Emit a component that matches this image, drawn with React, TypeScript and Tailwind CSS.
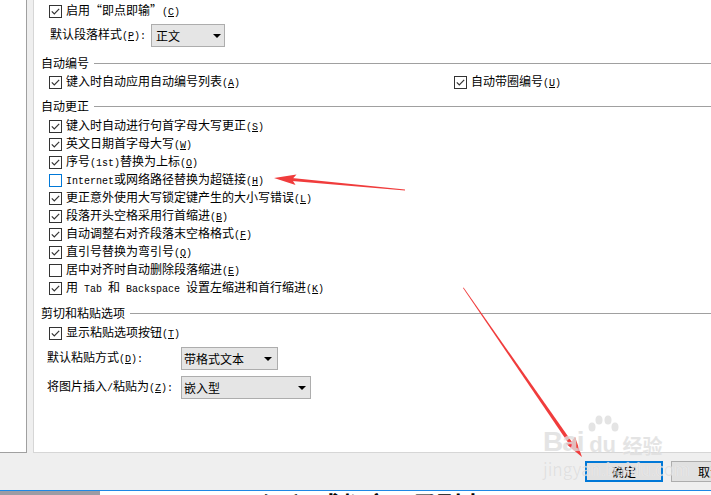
import React from "react"

const isAscii = (s: string) => /^[\x00-\x7f]+$/.test(s)

// Latin runs render as half-width mono, "&X" marks the underlined access key
function Latin({ s }: { s: string }) {
  const i = s.indexOf("&")
  const cls = "font-['Liberation_Mono',monospace] text-[10px]"
  if (i < 0) return <span className={cls}>{s}</span>
  return (
    <span className={cls}>
      {s.slice(0, i)}
      <span className="underline underline-offset-1">{s[i + 1]}</span>
      {s.slice(i + 2)}
    </span>
  )
}

function Label({ text }: { text: string }) {
  const parts = text.split(/([\x00-\x7f]+)/).filter(Boolean)
  return (
    <span className="whitespace-pre">
      {parts.map((p, i) => (isAscii(p) ? <Latin key={i} s={p} /> : <span key={i}>{p}</span>))}
    </span>
  )
}

function Box({ checked, focus }: { checked?: boolean; focus?: boolean }) {
  return (
    <svg width="13" height="13" viewBox="0 0 13 13" className="shrink-0">
      <rect x="0.5" y="0.5" width="12" height="12" fill="white" stroke={focus ? "#0078d7" : "#333333"} />
      {checked && <path d="M2.8 6.4 L5.3 8.9 L10.2 3.8" fill="none" stroke="#333333" strokeWidth="1.2" />}
    </svg>
  )
}

function Check({ text, checked = true, focus }: { text: string; checked?: boolean; focus?: boolean }) {
  return (
    <div className="flex h-[18px] items-center gap-[4px]">
      <Box checked={checked} focus={focus} />
      <Label text={text} />
    </div>
  )
}

function Group({ title, className }: { title: string; className: string }) {
  return (
    <div className={`flex h-[16px] items-center gap-[5px] pl-[7px] ${className}`}>
      <Label text={title} />
      <div className="h-px flex-1 bg-[#a0a0a0]" />
    </div>
  )
}

function Select({ value, width, pad }: { value: string; width: string; pad: string }) {
  return (
    <div className={`flex h-[23px] items-center justify-between border border-[#adadad] bg-[#e5e5e5] ${width} ${pad}`}>
      <Label text={value} />
      <svg width="8" height="4" viewBox="0 0 8 4">
        <path d="M0 0 H8 L4 4 Z" fill="#000" />
      </svg>
    </div>
  )
}

const autoCorrect = [
  { t: "键入时自动进行句首字母大写更正(&S)" },
  { t: "英文日期首字母大写(&W)" },
  { t: "序号(1st)替换为上标(&O)" },
  { t: "Internet或网络路径替换为超链接(&H)", off: true, focus: true },
  { t: "更正意外使用大写锁定键产生的大小写错误(&L)" },
  { t: "段落开头空格采用行首缩进(&B)" },
  { t: "自动调整右对齐段落末空格格式(&F)" },
  { t: "直引号替换为弯引号(&Q)" },
  { t: "居中对齐时自动删除段落缩进(&E)", off: true },
  { t: "用 Tab 和 Backspace 设置左缩进和首行缩进(&K)" },
]

export default function App() {
  return (
    <div className="relative flex h-[495px] w-[711px] flex-col overflow-hidden bg-[#efefef] font-['Noto_Sans_CJK_SC',sans-serif] text-[12px] leading-[18px] text-black">
      <div className="flex h-[453px] shrink-0">
        <div className="w-[27px] border-r border-b border-[#a0a0a0] bg-white" />
        <div className="w-[6px]" />
        <div className="flex flex-1 flex-col border-l border-b border-[#d6d6d6] bg-white">
          <div className="mt-[2px] pl-[15px]">
            <Check text="启用“即点即输”(&C)" />
          </div>
          <div className="mt-[4px] flex items-center pl-[16px]">
            <div className="w-[101px]">
              <Label text="默认段落样式(&P):" />
            </div>
            <Select value="正文" width="w-[74px]" pad="pl-[4px] pr-[3px]" />
          </div>

          <Group title="自动编号" className="mt-[8px]" />
          <div className="mt-[2px] flex pl-[15px]">
            <div className="w-[405px]">
              <Check text="键入时自动应用自动编号列表(&A)" />
            </div>
            <Check text="自动带圈编号(&U)" />
          </div>

          <Group title="自动更正" className="mt-[7px]" />
          <div className="mt-[3px] flex flex-col pl-[15px]">
            {autoCorrect.map(r => (
              <Check key={r.t} text={r.t} checked={!r.off} focus={r.focus} />
            ))}
          </div>

          <Group title="剪切和粘贴选项" className="mt-[8px]" />
          <div className="mt-[3px] pl-[15px]">
            <Check text="显示粘贴选项按钮(&T)" />
          </div>
          <div className="mt-[5px] flex items-center pl-[13px]">
            <div className="w-[134px]">
              <Label text="默认粘贴方式(&D):" />
            </div>
            <Select value="带格式文本" width="w-[97px]" pad="pl-[2px] pr-[5px]" />
          </div>
          <div className="mt-[6px] flex items-center pl-[13px]">
            <div className="w-[134px]">
              <Label text="将图片插入/粘贴为(&Z):" />
            </div>
            <Select value="嵌入型" width="w-[130px]" pad="pl-[2px] pr-[4px]" />
          </div>
        </div>
      </div>

      <div className="flex h-[37px] shrink-0 items-start justify-end gap-[8px] pt-[8px] -mr-[38px]">
        <button type="button" className="flex h-[21px] w-[78px] items-center justify-center border-2 border-[#0078d7] bg-[#e1e1e1]">
          确定
        </button>
        <button type="button" className="flex h-[21px] w-[78px] items-center justify-center border border-[#adadad] bg-[#e1e1e1]">
          取消
        </button>
      </div>

      <div className="h-px shrink-0 bg-[#1e88e5]" />
      <div className="flex h-[4px] shrink-0 overflow-hidden">
        <div className="w-[100px] bg-[#9c9ca4]" />
        <div className="flex-1 bg-white pl-[145px]">
          <div className="mt-[1px] text-[24px] font-bold leading-none">（二）成都市目录列表</div>
        </div>
      </div>

      {/* red annotation arrows */}
      <svg className="pointer-events-none absolute inset-0" width="711" height="495">
        <polygon points="405,189.6 405,190.4 292,181 292,178" fill="#f03c3c" />
        <polygon points="274,178 296.5,174.5 292,179.6 295.6,185" fill="#f03c3c" />
        <polygon points="463,288 463.6,287.6 572,442 569,444" fill="#f03c3c" />
        <polygon points="582,457 575,436.8 571.5,442 565.6,443.6" fill="#f03c3c" />
      </svg>

      {/* baidu watermark */}
      <div className="pointer-events-none absolute left-[543px] top-[414px] flex flex-col text-[#dedede] opacity-80 [text-shadow:0_0_1px_#fff]">
        <div className="flex items-end font-['Liberation_Sans',sans-serif]">
          <span className="text-[28px] font-bold leading-none tracking-[-1px]">Bai</span>
          <div className="relative ml-[2px] flex flex-col items-center">
            <svg width="34" height="20" viewBox="0 0 34 20" fill="#dedede">
              <ellipse cx="6" cy="13" rx="3.5" ry="4.5" />
              <ellipse cx="13" cy="6" rx="3.5" ry="4.5" />
              <ellipse cx="22" cy="6" rx="3.5" ry="4.5" />
              <ellipse cx="29" cy="13" rx="3.5" ry="4.5" />
            </svg>
            <span className="text-[22px] font-bold leading-none">du</span>
          </div>
          <span className="ml-[3px] font-['Noto_Sans_CJK_SC',sans-serif] text-[20px] font-bold leading-none">经验</span>
        </div>
        <span className="mt-[4px] text-[17px] leading-none">jingyan.baidu.com</span>
      </div>
    </div>
  )
}
